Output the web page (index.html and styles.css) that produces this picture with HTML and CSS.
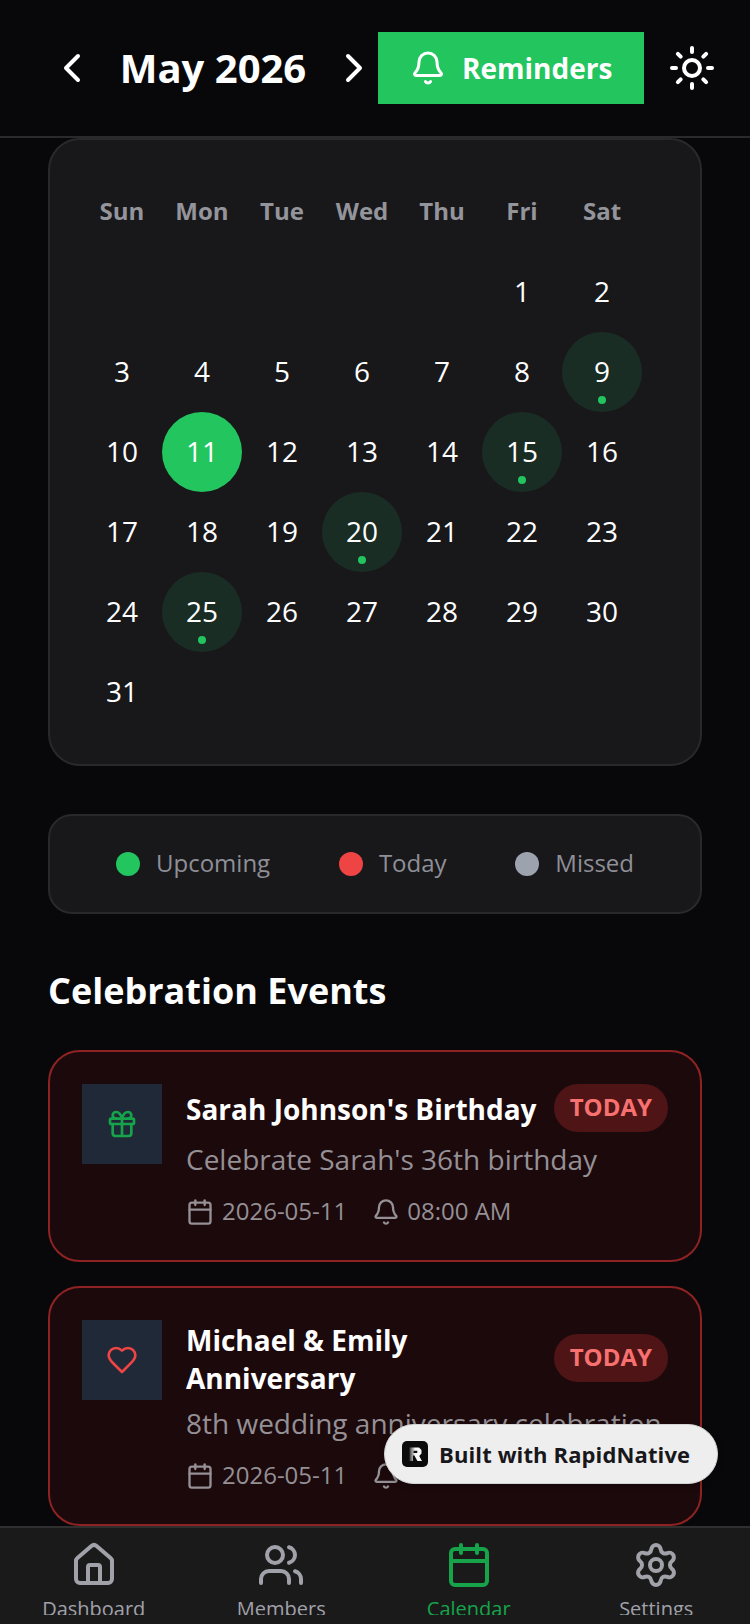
FILE: index.html
```html
<!DOCTYPE html>
<html lang="en">
<head>
<meta charset="utf-8">
<title>Calendar</title>
<link rel="stylesheet" href="styles.css">
</head>
<body>
<div class="app">
  <header class="header">
    <div class="month-nav">
      <svg class="icon i48" viewBox="0 0 24 24"><path d="m15 18-6-6 6-6"/></svg>
      <h1 class="month-title">May 2026</h1>
      <svg class="icon i48" viewBox="0 0 24 24"><path d="m9 18 6-6-6-6"/></svg>
    </div>
    <button class="reminders">
      <svg class="icon i36" viewBox="0 0 24 24"><path d="M10.268 21a2 2 0 0 0 3.464 0"/><path d="M3.262 15.326A1 1 0 0 0 4 17h16a1 1 0 0 0 .74-1.673C19.41 13.956 18 12.499 18 8A6 6 0 0 0 6 8c0 4.499-1.411 5.956-2.738 7.326"/></svg>
      <span>Reminders</span>
    </button>
    <svg class="icon i48 sun" viewBox="0 0 24 24"><circle cx="12" cy="12" r="4"/><path d="M12 2v2"/><path d="M12 20v2"/><path d="m4.93 4.93 1.41 1.41"/><path d="m17.66 17.66 1.41 1.41"/><path d="M2 12h2"/><path d="M20 12h2"/><path d="m6.34 17.66-1.41 1.41"/><path d="m19.07 4.93-1.41 1.41"/></svg>
  </header>

  <main class="content">
    <section class="panel calendar">
      <div class="weekdays">
        <span>Sun</span><span>Mon</span><span>Tue</span><span>Wed</span><span>Thu</span><span>Fri</span><span>Sat</span>
      </div>
      <div class="days">
        <span class="day"></span><span class="day"></span><span class="day"></span><span class="day"></span><span class="day"></span>
        <span class="day">1</span><span class="day">2</span>
        <span class="day">3</span><span class="day">4</span><span class="day">5</span><span class="day">6</span><span class="day">7</span><span class="day">8</span>
        <span class="day event">9<i class="dot"></i></span>
        <span class="day">10</span><span class="day selected">11</span><span class="day">12</span><span class="day">13</span><span class="day">14</span>
        <span class="day event">15<i class="dot"></i></span>
        <span class="day">16</span><span class="day">17</span><span class="day">18</span><span class="day">19</span>
        <span class="day event">20<i class="dot"></i></span>
        <span class="day">21</span><span class="day">22</span><span class="day">23</span><span class="day">24</span>
        <span class="day event">25<i class="dot"></i></span>
        <span class="day">26</span><span class="day">27</span><span class="day">28</span><span class="day">29</span><span class="day">30</span><span class="day">31</span>
      </div>
    </section>

    <section class="panel legend">
      <div class="legend-item"><i class="swatch green"></i><span>Upcoming</span></div>
      <div class="legend-item"><i class="swatch red"></i><span>Today</span></div>
      <div class="legend-item"><i class="swatch gray"></i><span>Missed</span></div>
    </section>

    <h2 class="section-title">Celebration Events</h2>

    <article class="event-card">
      <div class="event-icon">
        <svg class="icon i32 green-stroke" viewBox="0 0 24 24"><rect x="3" y="8" width="18" height="4" rx="1"/><path d="M12 8v13"/><path d="M19 12v7a2 2 0 0 1-2 2H7a2 2 0 0 1-2-2v-7"/><path d="M7.5 8a2.5 2.5 0 0 1 0-5A4.8 8 0 0 1 12 8a4.8 8 0 0 1 4.5-5 2.5 2.5 0 0 1 0 5"/></svg>
      </div>
      <div class="event-body">
        <div class="event-top">
          <h3 class="event-title">Sarah Johnson's Birthday</h3>
          <span class="badge">TODAY</span>
        </div>
        <p class="event-desc">Celebrate Sarah's 36th birthday</p>
        <div class="event-meta">
          <svg class="icon i28" viewBox="0 0 24 24"><path d="M8 2v4"/><path d="M16 2v4"/><rect width="18" height="18" x="3" y="4" rx="2"/><path d="M3 10h18"/></svg>
          <span class="meta-date">2026-05-11</span>
          <svg class="icon i28" viewBox="0 0 24 24"><path d="M10.268 21a2 2 0 0 0 3.464 0"/><path d="M3.262 15.326A1 1 0 0 0 4 17h16a1 1 0 0 0 .74-1.673C19.41 13.956 18 12.499 18 8A6 6 0 0 0 6 8c0 4.499-1.411 5.956-2.738 7.326"/></svg>
          <span>08:00 AM</span>
        </div>
      </div>
    </article>

    <article class="event-card">
      <div class="event-icon">
        <svg class="icon i32 red-stroke" viewBox="0 0 24 24"><path d="M19 14c1.49-1.46 3-3.21 3-5.5A5.5 5.5 0 0 0 16.5 3c-1.76 0-3 .5-4.5 2-1.5-1.5-2.74-2-4.5-2A5.5 5.5 0 0 0 2 8.5c0 2.3 1.5 4.05 3 5.5l7 7Z"/></svg>
      </div>
      <div class="event-body">
        <div class="event-top">
          <h3 class="event-title narrow">Michael &amp; Emily Anniversary</h3>
          <span class="badge">TODAY</span>
        </div>
        <p class="event-desc">8th wedding anniversary celebration</p>
        <div class="event-meta">
          <svg class="icon i28" viewBox="0 0 24 24"><path d="M8 2v4"/><path d="M16 2v4"/><rect width="18" height="18" x="3" y="4" rx="2"/><path d="M3 10h18"/></svg>
          <span class="meta-date">2026-05-11</span>
          <svg class="icon i28" viewBox="0 0 24 24"><path d="M10.268 21a2 2 0 0 0 3.464 0"/><path d="M3.262 15.326A1 1 0 0 0 4 17h16a1 1 0 0 0 .74-1.673C19.41 13.956 18 12.499 18 8A6 6 0 0 0 6 8c0 4.499-1.411 5.956-2.738 7.326"/></svg>
          <span>08:00 AM</span>
        </div>
      </div>
    </article>
  </main>

  <nav class="tabbar">
    <div class="tab">
      <svg class="icon i48" viewBox="0 0 24 24"><path d="M15 21v-8a1 1 0 0 0-1-1h-4a1 1 0 0 0-1 1v8"/><path d="M3 10a2 2 0 0 1 .709-1.528l7-5.999a2 2 0 0 1 2.582 0l7 5.999A2 2 0 0 1 21 10v9a2 2 0 0 1-2 2H5a2 2 0 0 1-2-2z"/></svg>
      <span class="tab-label">Dashboard</span>
    </div>
    <div class="tab">
      <svg class="icon i48" viewBox="0 0 24 24"><path d="M16 21v-2a4 4 0 0 0-4-4H6a4 4 0 0 0-4 4v2"/><path d="M16 3.128a4 4 0 0 1 0 7.744"/><path d="M22 21v-2a4 4 0 0 0-3-3.87"/><circle cx="9" cy="7" r="4"/></svg>
      <span class="tab-label">Members</span>
    </div>
    <div class="tab active">
      <svg class="icon i48" viewBox="0 0 24 24"><path d="M8 2v4"/><path d="M16 2v4"/><rect width="18" height="18" x="3" y="4" rx="2"/><path d="M3 10h18"/></svg>
      <span class="tab-label">Calendar</span>
    </div>
    <div class="tab">
      <svg class="icon i48" viewBox="0 0 24 24"><path d="M9.671 4.136a2.34 2.34 0 0 1 4.659 0 2.34 2.34 0 0 0 3.319 1.915 2.34 2.34 0 0 1 2.33 4.033 2.34 2.34 0 0 0 0 3.831 2.34 2.34 0 0 1-2.33 4.033 2.34 2.34 0 0 0-3.319 1.915 2.34 2.34 0 0 1-4.659 0 2.34 2.34 0 0 0-3.32-1.915 2.34 2.34 0 0 1-2.33-4.033 2.34 2.34 0 0 0 0-3.831A2.34 2.34 0 0 1 6.35 6.051a2.34 2.34 0 0 0 3.319-1.915"/><circle cx="12" cy="12" r="3"/></svg>
      <span class="tab-label">Settings</span>
    </div>
  </nav>

  <div class="built-badge">
    <svg class="built-logo" viewBox="0 0 26 26">
      <defs><linearGradient id="rfade" x1="0" y1="0" x2="1" y2="0"><stop offset="0" stop-color="#3a3a3a"/><stop offset=".45" stop-color="#f6f6f6"/></linearGradient></defs>
      <rect width="26" height="26" rx="5" fill="#0b0b0c"/>
      <path fill-rule="evenodd" d="M7.5 6.5H17l2.5 2.5v3.5L17.2 15l2.8 5h-4.6l-3-5.5H11V20H7.5zM11.5 9.8v2.2h3.8V9.8z" fill="url(#rfade)"/>
    </svg>
    <span>Built with RapidNative</span>
  </div>
</div>
</body>
</html>
```
FILE: styles.css
```css
* { box-sizing: border-box; margin: 0; padding: 0; }
html, body { width: 750px; height: 1624px; overflow: hidden; background: #08080b; }
body { font-family: "Open Sans", "Noto Sans", sans-serif; color: #fff; }

.app { position: relative; width: 750px; height: 1624px; display: flex; flex-direction: column; overflow: hidden; }

.icon { fill: none; stroke: currentColor; stroke-width: 2; stroke-linecap: round; stroke-linejoin: round; flex: none; display: block; }
.i48 { width: 48px; height: 48px; }
.i36 { width: 36px; height: 36px; }
.i32 { width: 32px; height: 32px; }
.i28 { width: 28px; height: 28px; }

.header { flex: none; height: 138px; padding: 32px 34px 32px 48px; display: flex; align-items: center; border-bottom: 2px solid #2a2a2d; }
.month-nav { display: flex; align-items: center; width: 330px; justify-content: space-between; }
.month-title { font-size: 40px; line-height: 54px; font-weight: 700; }
.reminders { width: 266px; height: 72px; border: 0; background: #22c55e; color: #fff; display: flex; align-items: center; gap: 16px; padding: 0 32px; font: 700 28px/38px "Open Sans", sans-serif; }
.sun { margin-left: auto; }

.content { flex: 1; min-height: 0; padding: 0 48px; overflow: hidden; }
.panel { background: #18181b; border: 2px solid #29292d; }
.calendar { border-radius: 32px; padding: 32px; height: 628px; }
.weekdays { display: flex; height: 80px; }
.weekdays span { width: 80px; height: 76px; display: flex; align-items: center; justify-content: center; font-size: 24px; font-weight: 700; color: #94949b; }
.days { display: flex; flex-wrap: wrap; width: 560px; }
.day { position: relative; width: 80px; height: 80px; padding-bottom: 2px; border-radius: 50%; display: flex; align-items: center; justify-content: center; font-size: 28px; line-height: 38px; }
.day.selected { background: #22c55e; }
.day.event { background: #1a2d24; }
.dot { position: absolute; left: 36px; bottom: 8px; width: 8px; height: 8px; border-radius: 50%; background: #22c55e; }

.legend { margin-top: 48px; height: 100px; border-radius: 24px; display: flex; align-items: center; justify-content: space-between; padding: 0 66px; }
.legend-item { display: flex; align-items: center; gap: 16px; font-size: 24px; line-height: 32px; color: #8f8f97; }
.legend-item span { position: relative; top: -1px; }
.swatch { width: 24px; height: 24px; border-radius: 50%; display: block; }
.green { background: #22c55e; }
.red { background: #ef4444; }
.gray { background: #9ca3af; }

.section-title { margin-top: 53px; margin-bottom: 35px; font-size: 36px; line-height: 48px; font-weight: 700; }

.event-card { display: flex; gap: 24px; padding: 32px; background: #1c090c; border: 2px solid #8f2323; border-radius: 32px; margin-bottom: 24px; }
.event-icon { flex: none; width: 80px; height: 80px; background: #1f2937; display: flex; align-items: center; justify-content: center; }
.green-stroke { color: #16a34a; }
.red-stroke { color: #ef4444; }
.event-body { flex: 1; min-width: 0; }
.event-top { display: flex; align-items: center; justify-content: space-between; gap: 16px; }
.event-title { font-size: 28px; line-height: 38px; font-weight: 700; flex: 1; position: relative; top: 1px; }
.badge { flex: none; height: 48px; padding: 0 16px; border-radius: 24px; background: #4f1416; color: #f87171; font-size: 24px; line-height: 46px; font-weight: 700; }
.event-desc { margin-top: 8px; font-size: 28px; line-height: 40px; color: #949095; white-space: nowrap; position: relative; top: -1px; }
.event-meta { margin-top: 15px; margin-bottom: 1px; height: 32px; display: flex; align-items: center; gap: 7px; font-size: 24px; line-height: 32px; color: #949095; }
.event-meta .icon { position: relative; top: 1px; }
.meta-date { margin: 0 18px 0 1px; }

.tabbar { flex: none; height: 98px; background: #1a1a1a; border-top: 2px solid #2f2f2f; padding-top: 13px; display: flex; }
.tab { width: 187.5px; height: 74px; overflow: hidden; display: flex; flex-direction: column; align-items: center; color: #a1a1aa; }
.tab.active { color: #16a34a; }
.tab-label { font-size: 20px; line-height: 28px; margin-top: 6px; white-space: nowrap; }

.built-badge { position: absolute; left: 384px; top: 1424px; width: 334px; height: 60px; border-radius: 30px; background: #efeeef; border: 1px solid #d4d4d4; color: #18181b; display: flex; align-items: center; gap: 11px; padding-left: 17px; font-size: 22px; font-weight: 700; letter-spacing: .12px; white-space: nowrap; box-shadow: 0 2px 6px rgba(0,0,0,.25); }
.built-logo { width: 26px; height: 26px; flex: none; }
```
